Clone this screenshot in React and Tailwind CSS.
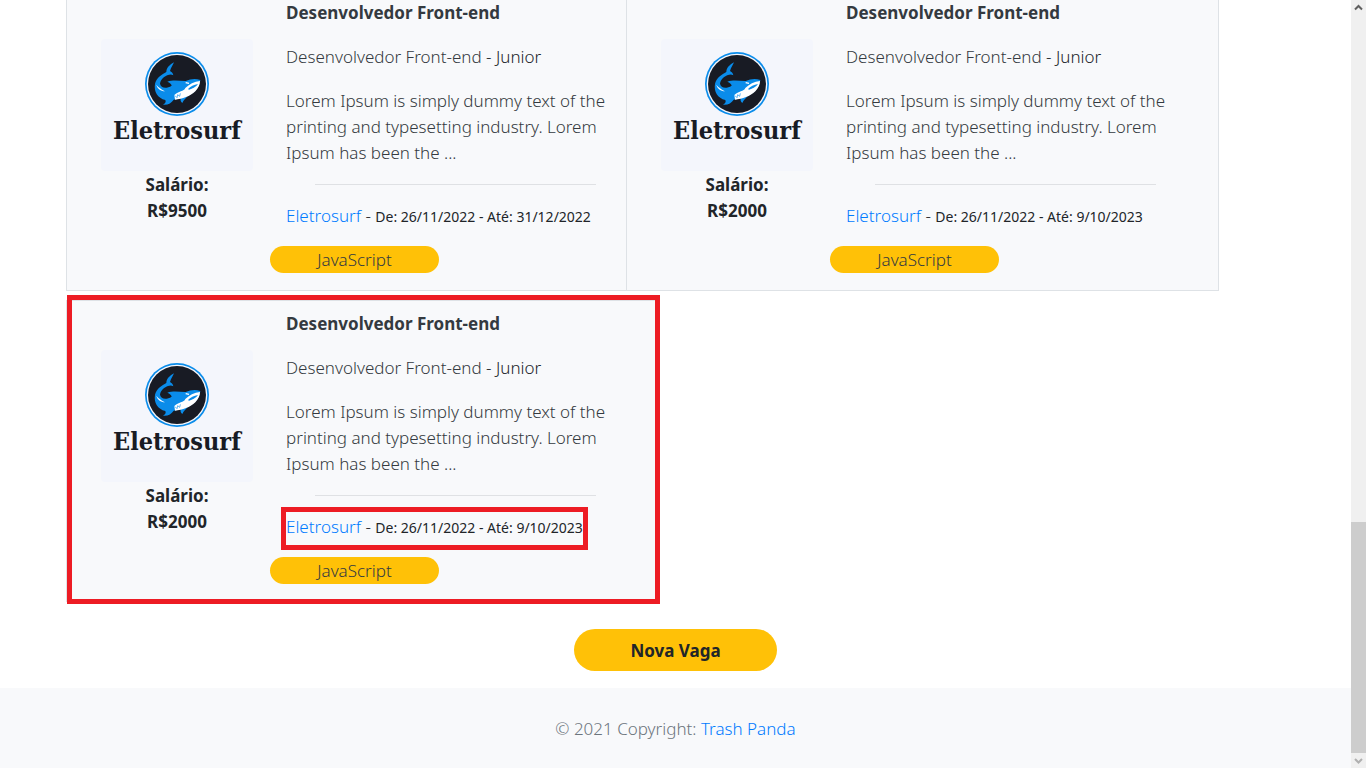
import React from "react";

const jobs = [
  { id: 1, salary: "R$9500", from: "26/11/2022", to: "31/12/2022" },
  { id: 2, salary: "R$2000", from: "26/11/2022", to: "9/10/2023" },
  { id: 3, salary: "R$2000", from: "26/11/2022", to: "9/10/2023", marked: true },
];

function SharkLogo() {
  return (
    <svg viewBox="15 10 192 192" className="size-16 shrink-0" aria-hidden="true">
      <circle cx="111" cy="106" r="96" fill="#0a8cea" />
      <circle cx="111" cy="106" r="91" fill="#f4f6fc" />
      <circle cx="111" cy="106" r="87" fill="#181b24" />
      <path
        fill="#0a8cea"
        d="M102 41C88 49 79 58 79 70C66 77 49 88 45 105C41 129 53 148 76 154C79 161 75 165 69 168C83 170 94 163 101 153L122 149C121 155 122 160 127 163C130 154 138 149 144 141C162 134 178 118 181 94C166 89 151 91 137 97C118 97 100 93 82 99C89 102 94 106 95 111C79 121 63 119 60 105C62 91 74 83 84 79C90 76 96 77 100 80C99 72 94 70 90 67C93 57 98 50 102 41Z"
      />
      <path
        fill="#fff"
        d="M180 97C163 99 147 107 136 118C132 129 115 127 103 139L105 153C127 151 151 143 166 128C175 118 180 108 180 97Z"
      />
      <path d="M49 108C52 120 62 127 75 128C64 122 55 116 49 108Z" fill="#fff" />
      <path d="M174 106C162 108 151 114 144 121L147 123C158 120 168 115 174 106Z" fill="#0a8cea" />
      <path d="M137 102L147 104" stroke="#fff" strokeWidth="4" />
      <path d="M105 141L111 147L113 138L119 143L121 134" fill="none" stroke="#0a8cea" strokeWidth="2" />
    </svg>
  );
}

function JobCard({ job }) {
  return (
    <article className="relative -mr-[33px] flex border border-[#dee2e6] bg-[#f8f9fb] pt-[10px] pb-[17px] pl-[34px]">
      <div className="mt-[39px] flex w-[152px] shrink-0 flex-col items-center gap-px">
        <div className="flex h-[132px] w-full flex-col items-center rounded bg-[#f4f6fc] pt-[13px]">
          <SharkLogo />
          <span className="font-['DejaVu_Serif_Condensed','DejaVu_Serif',serif] text-[25px] leading-[30px] font-bold text-[#181b24]">
            Eletrosurf
          </span>
        </div>
        <p className="text-center font-bold">
          Salário:
          <br />
          {job.salary}
        </p>
      </div>
      <div className="ml-[33px] flex w-[339px] flex-col gap-[18px]">
        <h2 className="font-bold text-[#343a40]">Desenvolvedor Front-end</h2>
        <p>
          <span className="text-[#343a40]">Desenvolvedor Front-end</span> - <span>Junior</span>
        </p>
        <p className="text-[#343a40]">
          Lorem Ipsum is simply dummy text of the printing and typesetting industry. Lorem Ipsum has been the ...
        </p>
        <hr className="w-[281px] self-center border-[#dfe1e4]" />
        <p className="relative self-start leading-[25px] whitespace-nowrap">
          <a href="#empresa" className="text-[#007bff]">Eletrosurf</a> -{" "}
          <span className="text-[14px] leading-none font-normal">
            De: {job.from} - Até: {job.to}
          </span>
          {job.marked && (
            <span className="pointer-events-none absolute -inset-x-[5px] -top-[7px] -bottom-[11px] border-5 border-[#ed1c24]" />
          )}
        </p>
        <span className="-ml-4 h-[27px] w-[169px] rounded-full bg-[#ffc107] text-center leading-[28px] text-[#343a40]">
          JavaScript
        </span>
      </div>
      {job.marked && (
        <span className="pointer-events-none absolute -top-[6px] -right-[2px] -bottom-[3px] left-0 border-5 border-[#ed1c24]" />
      )}
    </article>
  );
}

function Scrollbar() {
  return (
    <div className="flex w-[15px] shrink-0 flex-col items-center bg-[#f0f0f0]" aria-hidden="true">
      <svg viewBox="0 0 15 15" className="size-[15px]">
        <path d="M4 9.500L7.500 6L11 9.500" fill="none" stroke="#606060" strokeWidth="2" />
      </svg>
      <div className="grow-507 basis-0" />
      <div className="w-full grow-231 basis-0 bg-[#cdcdcd]" />
      <svg viewBox="0 0 15 15" className="size-[15px]">
        <path d="M4 6L7.500 9.500L11 6" fill="none" stroke="#b0b0b0" strokeWidth="2" />
      </svg>
    </div>
  );
}

export default function App() {
  return (
    <div className="flex h-screen overflow-hidden bg-white font-['Noto_Sans','Open_Sans',sans-serif] text-[17px] leading-[26px] font-light text-[#212529]">
      <div className="flex min-w-0 grow flex-col">
        <main className="flex grow flex-col items-center">
          <div className="-mt-[11px] w-full pr-[165px] pl-[66px]">
            <div className="grid grid-cols-2 gap-y-[9px]">
              {jobs.map((job) => (
                <JobCard key={job.id} job={job} />
              ))}
            </div>
          </div>
          <button type="button" className="mt-[27px] h-[42px] w-[203px] rounded-full bg-[#ffc107] pt-px font-bold">
            Nova Vaga
          </button>
        </main>
        <footer className="bg-[#f8f9fb] pt-[28px] pb-[26px] text-center text-[#6c757d]">
          © 2021 Copyright:{" "}
          <a href="#trash-panda" className="text-[#007bff]">Trash Panda</a>
        </footer>
      </div>
      <Scrollbar />
    </div>
  );
}
